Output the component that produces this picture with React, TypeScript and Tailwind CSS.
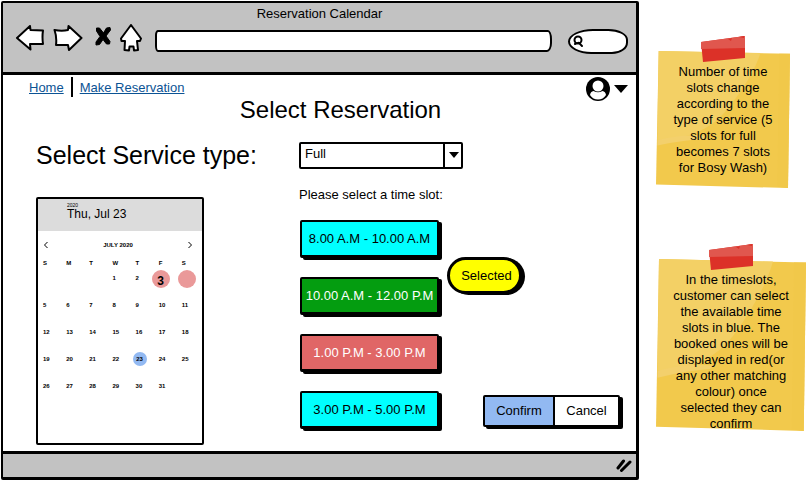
import type { ReactNode } from "react";

const weekdays = ["S", "M", "T", "W", "T", "F", "S"];
const weeks = [
  [0, 0, 0, 1, 2, 3, 4],
  [5, 6, 7, 8, 9, 10, 11],
  [12, 13, 14, 15, 16, 17, 18],
  [19, 20, 21, 22, 23, 24, 25],
  [26, 27, 28, 29, 30, 31, 0],
];

const slots = [
  { label: "8.00 A.M - 10.00 A.M", tone: "bg-[#00ffff] text-black" },
  { label: "10.00 A.M - 12.00 P.M", tone: "bg-[#049d10] text-white" },
  { label: "1.00 P.M - 3.00 P.M", tone: "bg-[#e06666] text-white" },
  { label: "3.00 P.M - 5.00 P.M", tone: "bg-[#00ffff] text-black" },
];

function Toolbar() {
  return (
    <header className="h-[72px] border-b-3 border-black bg-[#c2c2c2]">
      <h1 className="h-5 text-center text-[13px] leading-[22px]">Reservation Calendar</h1>
      <div className="flex h-8 items-center pl-3 pr-2">
        <button aria-label="Back" className="mr-2">
          <svg className="block" width="30" height="28" viewBox="0 0 30 28" fill="white" stroke="black" strokeWidth="2" strokeLinejoin="round">
            <path d="M2 13 L15 1 L15.500 5 L28 5.500 Q27 12 28 19 L15 19 L15.500 24.500 Z" />
          </svg>
        </button>
        <button aria-label="Forward" className="mr-3">
          <svg className="block" width="30" height="28" viewBox="0 0 30 28" fill="white" stroke="black" strokeWidth="2" strokeLinejoin="round">
            <path d="M1.500 5 Q9 6.500 15 5 L15.500 1 L28.500 13 L16 25 L15 20 L3 20 Q4 12 1.500 5 Z" />
          </svg>
        </button>
        <button aria-label="Stop" className="mr-2">
          <svg className="block" width="16" height="28" viewBox="0 0 16 28" fill="black" stroke="black" strokeLinejoin="round">
            <path d="M1.500 3 L4.500 3 L8.500 8 L11.500 3 L15 2.500 L15.500 5 L11 11 L15 16.500 L14.500 19 L11.500 19 L8 14.500 L4.500 19.500 L1 20 L1 17 L5 11.500 L1.500 6 Z" />
          </svg>
        </button>
        <button aria-label="Home page" className="mr-3">
          <svg className="block" width="24" height="30" viewBox="0 0 24 30" fill="white" stroke="black" strokeWidth="2" strokeLinejoin="round">
            <path d="M12 1 L22 14.500 L21 17 L18 17 L19 26 L15 26.500 L14.500 22.500 L10.500 22.500 L10 26.500 L5.500 26 L6 17 L2.500 17 L2 14.500 Z" />
          </svg>
        </button>
        <input
          aria-label="Address"
          className="mt-1 h-[22px] min-w-0 flex-1 rounded-[3px_4px_5px_3px/5px_9px_9px_6px] border-2 border-black bg-white px-2 text-[13px] outline-none"
        />
        <label className="mt-1 ml-4 flex h-[25px] w-[60px] items-center rounded-[28px_22px_18px_26px/14px_12px_13px_14px] border-2 border-black bg-white pl-[2px]">
          <svg className="shrink-0" width="12" height="14" viewBox="0 0 12 14" fill="none" stroke="black" strokeWidth="2" strokeLinecap="round">
            <circle cx="6" cy="6" r="3.500" />
            <path d="M3 10 Q7 8 7.500 9.500 L10 12" />
          </svg>
          <input aria-label="Search" className="min-w-0 flex-1 bg-transparent text-[13px] outline-none" />
        </label>
      </div>
    </header>
  );
}

function Day({ day }: { day: number }) {
  if (day === 0) return null;
  if (day === 3)
    return (
      <button className="-ml-[7px] -mt-1 flex size-[18px] items-end justify-center rounded-full bg-[#ea9999] text-[12px] font-bold leading-[14px]">
        3
      </button>
    );
  if (day === 4) return <button aria-label="4" className="-ml-1 -mt-1 block size-[18px] rounded-full bg-[#ea9999]" />;
  if (day === 23)
    return (
      <button className="-ml-[3px] -mt-[3px] flex size-[14px] items-center justify-center rounded-full bg-[#92b9f2] font-bold">
        23
      </button>
    );
  return <button className="block">{day}</button>;
}

function Calendar() {
  return (
    <section className="h-[248px] w-[168px] rounded-[2px] border-[2px] border-black bg-white">
      <div className="h-8 bg-[#dcdcdc] pl-[29px] pt-1">
        <p className="text-[5px] leading-[5px]">2020</p>
        <p className="text-[12px] leading-3">Thu, Jul 23</p>
      </div>
      <div className="flex h-7 items-center justify-between px-[5px]">
        <button aria-label="Previous month">
          <svg className="block" width="6" height="8" viewBox="0 0 6 8" fill="none" stroke="black">
            <path d="M4.500 1 L1.500 4 L4.500 7" />
          </svg>
        </button>
        <h3 className="text-[6px] font-bold leading-[8px]">JULY 2020</h3>
        <button aria-label="Next month" className="mr-1">
          <svg className="block" width="6" height="8" viewBox="0 0 6 8" fill="none" stroke="black">
            <path d="M1.500 1 L4.500 4 L1.500 7" />
          </svg>
        </button>
      </div>
      <table className="ml-[5px] w-[162px] table-fixed text-left text-[6px] font-bold leading-[8px] text-black">
        <thead>
          <tr className="h-[15px] align-top">
            {weekdays.map((d, i) => (
              <th key={i} scope="col" className="p-0">{d}</th>
            ))}
          </tr>
        </thead>
        <tbody>
          {weeks.map((week, i) => (
            <tr key={i} className="h-[27px] align-top">
              {week.map((day, j) => (
                <td key={j} className="p-0"><Day day={day} /></td>
              ))}
            </tr>
          ))}
        </tbody>
      </table>
    </section>
  );
}

function Note({ tape, size, children }: { tape: string; size: string; children: ReactNode }) {
  return (
    <article className={`relative ${size}`}>
      <svg className="absolute inset-0 size-full" viewBox="0 0 100 100" preserveAspectRatio="none">
        <path d="M2 0 L100 2 L98.500 100 L0 97.500 Z" fill="#f2c94c" />
        <path d="M2 0 L78 1.500 Q72 20 52 44 Q35 64 1 65 Z" fill="#f3d065" />
        <path d="M1 65 Q22 60 38 62 L36 64 Q20 65 1 69 Z" fill="#f3d06c" />
        <path d="M92 2 L100 2 L98.500 100 L90.500 99 Z" fill="#f1c84a" />
      </svg>
      <svg className={`absolute -top-4 h-[27px] w-[46px] ${tape}`} viewBox="0 0 46 27">
        <path d="M1 7 L45 1 L45 23 L3 27 Z" fill="#dc3128" />
        <path d="M1 7 L45 1 L45 13 L1 14 Z" fill="#e0574e" />
        <path d="M28 4 L32 3 L31 6 Z M39 2 L44 1 L44 3 Z" fill="#dc3128" />
      </svg>
      <p className="relative px-3 pt-[13px] text-center text-[13px] leading-[16px]">{children}</p>
    </article>
  );
}

export default function App() {
  return (
    <div className="flex min-h-screen items-start bg-white font-['Liberation_Sans',Arial,sans-serif] text-black">
      <div className="ml-px mt-px min-w-0 flex-1 rounded-[2px] border-t-2 border-r-3 border-b-3 border-l-2 border-black">
        <Toolbar />
        <main className="pb-[6px]">
          <div className="flex h-[23px] items-start justify-between pl-[26px] pr-2 pt-[2px]">
            <nav className="flex items-start text-[13px] leading-5 text-[#0b5394]">
              <a href="#home" className="mt-px underline">Home</a>
              <span className="mx-[7px] h-5 w-[2px] bg-black" />
              <a href="#reservation" className="mt-px underline">Make Reservation</a>
            </nav>
            <button aria-label="Account" className="flex items-center gap-1">
              <svg width="24" height="24" viewBox="0 0 24 24">
                <circle cx="12" cy="12" r="12" fill="black" />
                <path d="M4 18 Q4.500 14.500 7.500 14 Q12 16.500 16.500 14 Q19.500 14.500 20 18 Q17 22.500 12 22.500 Q7 22.500 4 18 Z" fill="white" />
                <circle cx="12" cy="9" r="5.500" fill="white" />
              </svg>
              <svg width="14" height="8" viewBox="0 0 14 8"><path d="M0 0 H14 L7 8 Z" /></svg>
            </button>
          </div>
          <h2 className="pl-[42px] text-center text-[24px] leading-[24px]">Select Reservation</h2>
          <div className="mt-[19px] flex items-center pl-[33px]">
            <label htmlFor="service" className="w-[263px] shrink-0 text-[25px] leading-7">Select Service type:</label>
            <div className="relative h-[27px] w-[164px]">
              <select id="service" className="block size-full appearance-none rounded-[2px] border-[2px] border-black bg-white pl-1 pb-1 text-[13px] outline-none">
                <option>Full</option>
                <option>Bosy Wash</option>
              </select>
              <span className="pointer-events-none absolute inset-y-0 right-0 flex w-5 items-center justify-center border-l-2 border-black">
                <svg width="10" height="6" viewBox="0 0 10 6"><path d="M0 0 H10 L5 6 Z" /></svg>
              </span>
            </div>
          </div>
          <div className="flex items-start pl-[33px] pt-4">
            <div className="w-[263px] shrink-0 pt-3">
              <Calendar />
            </div>
            <section className="w-[148px] shrink-0">
              <h3 className="h-[35px] whitespace-nowrap text-[13px] leading-5">Please select a time slot:</h3>
              <div className="ml-px flex w-[139px] flex-col gap-[19px]">
                {slots.map((slot) => (
                  <button key={slot.label} className={`h-[38px] whitespace-nowrap rounded-[2px] border-t-2 border-r-2 border-b-3 border-l-2 border-black text-[13px] shadow-[3px_2px_0_black] ${slot.tone}`}>
                    {slot.label}
                  </button>
                ))}
              </div>
            </section>
            <section className="pt-[72px]">
              <button className="h-[37px] w-[75px] rounded-full border-[3px] border-black bg-[#ffff00] pl-1 text-[13px] shadow-[3px_1px_0_black]">
                Selected
              </button>
              <div className="ml-9 mt-[101px] flex h-8 w-[137px] rounded-[2px] border-[2px] border-black bg-white text-[13px] shadow-[3px_2px_0_black]">
                <button className="w-[70px] border-r-2 border-black bg-[#92b9f2]">Confirm</button>
                <button className="flex-1">Cancel</button>
              </div>
            </section>
          </div>
        </main>
        <footer className="flex h-[26px] items-center justify-end border-t-3 border-black bg-[#c2c2c2] pr-1">
          <svg width="16" height="13" viewBox="0 0 16 13" stroke="black" strokeWidth="3" strokeLinecap="round">
            <path d="M2 9 L7.500 2 M5.500 11.500 L14 3" />
          </svg>
        </footer>
      </div>
      <aside className="flex w-[168px] shrink-0 flex-col gap-[71px] pl-[17px] pt-[51px]">
        <Note tape="left-11" size="h-[137px] w-[134px]">
          Number of time<br />slots change<br />according to the<br />type of service (5<br />slots for full<br />becomes 7 slots<br />for Bosy Wash)
        </Note>
        <Note tape="left-[52px]" size="h-[172px] w-[150px]">
          In the timeslots,<br />customer can select<br />the available time<br />slots in blue. The<br />booked ones will be<br />displayed in red(or<br />any other matching<br />colour) once<br />selected they can<br />confirm
        </Note>
      </aside>
    </div>
  );
}
